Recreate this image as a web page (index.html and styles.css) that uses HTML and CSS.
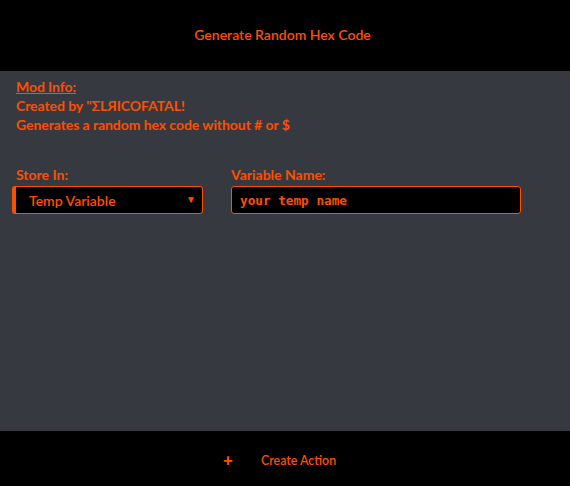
FILE: index.html
```
<!DOCTYPE html>
<html>
<head>
<meta charset="utf-8">
<link rel="stylesheet" href="styles.css">
</head>
<body>
<div class="app">
  <header class="top">Generate Random Hex Code</header>
  <main class="content">
    <div class="info">
      <div class="info-title">Mod Info:</div>
      <div>Created by "ΣLЯICOFATAL!</div>
      <div>Generates a random hex code without # or $</div>
    </div>
    <div class="fields">
      <div class="field field-store">
        <div class="label label-store">Store In:</div>
        <div class="select"><span>Temp Variable</span><span class="arrow">▼</span></div>
      </div>
      <div class="field field-name">
        <div class="label">Variable Name:</div>
        <div class="input">your temp name</div>
      </div>
    </div>
  </main>
  <footer class="bottom">
    <span class="plus">+</span>
    <span class="create">Create Action</span>
  </footer>
</div>
</body>
</html>
```
FILE: styles.css
```
* { box-sizing: border-box; }
html, body { margin: 0; padding: 0; }
body { background: #36393f; font-family: Lato, "Noto Sans", sans-serif; color: #ff4e00; }
.app { width: 570px; height: 486px; display: flex; flex-direction: column; }
.top { height: 71px; background: #000; display: flex; align-items: center; justify-content: center; font-size: 14px; font-weight: 600; padding: 0 5px 3px 0; }
.content { flex: 1; background: #36393f; padding: 6px 16px 0 16px; }
.info { font-weight: 700; font-size: 14px; line-height: 19px; letter-spacing: -0.07px; }
.info-title { text-decoration: underline; }
.fields { display: flex; margin-top: 32px; margin-left: -4px; }
.label { font-weight: 700; font-size: 14px; line-height: 18px; }
.label-store { padding-left: 4px; }
.field-store { width: 191px; }
.field-name { width: 290px; margin-left: 28px; }
.select { height: 28px; margin-top: 2px; background: #000; border: 1px solid #ff4e00; border-left-width: 4px; border-radius: 3px; display: flex; align-items: center; justify-content: space-between; padding: 1px 6px 0 13px; font-size: 14px; font-weight: 600; }
.arrow { font-size: 10px; margin-top: -3px; }
.input { height: 28px; margin-top: 2px; background: #000; border: 1px solid #ff4e00; border-radius: 3px; display: flex; align-items: center; padding: 1px 8px 0; font-family: "DejaVu Sans Mono", monospace; font-size: 12.7px; font-weight: 700; }
.bottom { height: 55px; background: #000; display: flex; align-items: center; padding-left: 223px; padding-top: 4px; font-size: 12.4px; font-weight: 600; }
.plus { font-size: 17px; font-weight: 900; width: 38px; margin-top: -3px; }
```
